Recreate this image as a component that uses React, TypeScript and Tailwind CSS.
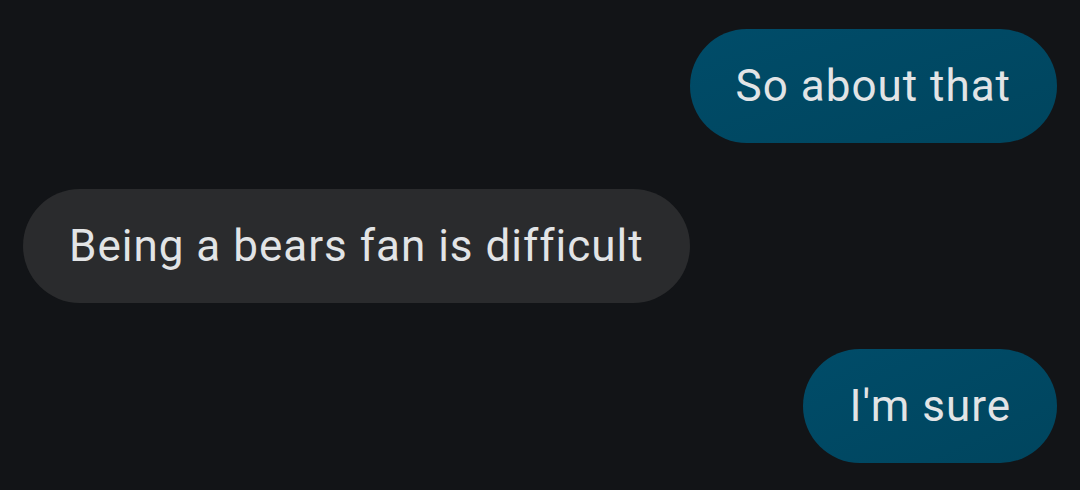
export default function App() {
  const messages = [
    { text: 'So about that', mine: true },
    { text: 'Being a bears fan is difficult', mine: false },
    { text: "I'm sure", mine: true },
  ]

  return (
    <main
      className="w-[1080px] h-[490px] bg-[#121417] flex flex-col gap-[46px] px-[23px] pt-[29px] overflow-hidden"
      style={{ fontFamily: 'Roboto, "Noto Sans", sans-serif' }}
    >
      {messages.map((m, i) => (
        <div key={i} className={m.mine ? 'flex justify-end' : 'flex justify-start'}>
          <div
            className={
              'h-[114px] flex items-center px-[46px] rounded-full text-[44px] tracking-[1px] text-[#e2e4e6] leading-none ' +
              (m.mine ? 'bg-gradient-to-br from-[#004c69] to-[#00455e]' : 'bg-[#2a2b2d]')
            }
          >
            {m.text}
          </div>
        </div>
      ))}
    </main>
  )
}
